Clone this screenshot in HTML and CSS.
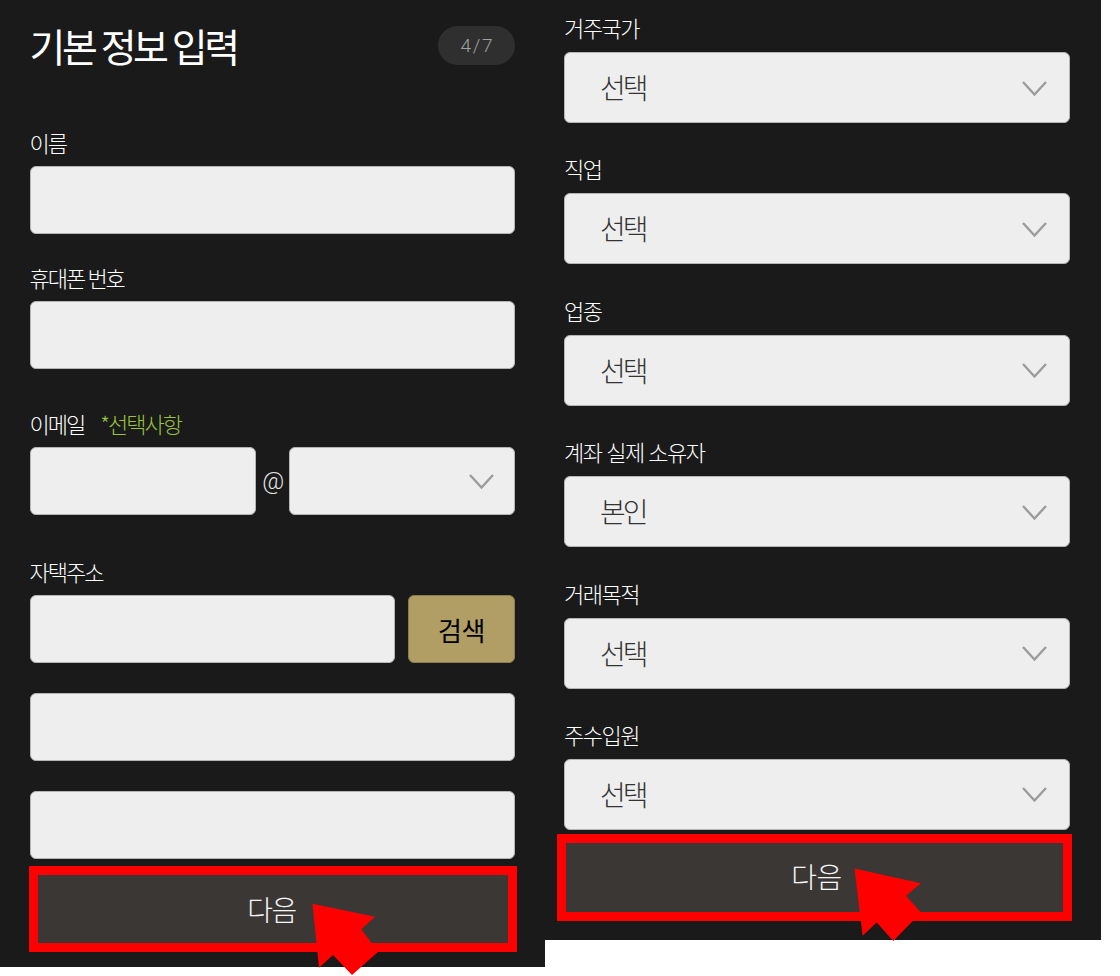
FILE: index.html
```html
<!DOCTYPE html>
<html lang="ko">
<head>
<meta charset="utf-8">
<title>기본 정보 입력</title>
<link rel="stylesheet" href="styles.css">
</head>
<body>
<div class="sheet">
  <section class="panel panel-left">
    <header class="head">
      <h1 class="title">기본 정보 입력</h1>
      <span class="step">4 / 7</span>
    </header>
    <div class="field field-name">
      <label class="label">이름</label>
      <input class="box" type="text">
    </div>
    <div class="field field-phone">
      <label class="label">휴대폰 번호</label>
      <input class="box" type="text">
    </div>
    <div class="field field-mail">
      <label class="label">이메일<span class="optional">*선택사항</span></label>
      <div class="row">
        <input class="box mail-id" type="text">
        <span class="at">@</span>
        <div class="box select mail-domain">
          <svg class="chev" viewBox="0 0 25 15"><path d="M1 1L12.5 13.5L24 1"/></svg>
        </div>
      </div>
    </div>
    <div class="field field-addr">
      <label class="label">자택주소</label>
      <div class="row row-addr">
        <input class="box addr" type="text">
        <button class="search" type="button">검색</button>
      </div>
    </div>
    <input class="box extra extra-one" type="text">
    <input class="box extra extra-two" type="text">
    <button class="next next-left" type="button">다음</button>
    <svg class="arrow arrow-left" viewBox="0 0 70 74"><polygon points="0.5,0.7 63,13.7 49.4,26.3 66,49 40,72 21,52 7,64.7"/></svg>
  </section>
  <section class="panel panel-right">
    <div class="field"><label class="label">거주국가</label><div class="box select big"><span>선택</span><svg class="chev" viewBox="0 0 25 15"><path d="M1 1L12.5 13.5L24 1"/></svg></div></div>
    <div class="field"><label class="label">직업</label><div class="box select big"><span>선택</span><svg class="chev" viewBox="0 0 25 15"><path d="M1 1L12.5 13.5L24 1"/></svg></div></div>
    <div class="field"><label class="label">업종</label><div class="box select big"><span>선택</span><svg class="chev" viewBox="0 0 25 15"><path d="M1 1L12.5 13.5L24 1"/></svg></div></div>
    <div class="field"><label class="label">계좌 실제 소유자</label><div class="box select big"><span>본인</span><svg class="chev" viewBox="0 0 25 15"><path d="M1 1L12.5 13.5L24 1"/></svg></div></div>
    <div class="field"><label class="label">거래목적</label><div class="box select big"><span>선택</span><svg class="chev" viewBox="0 0 25 15"><path d="M1 1L12.5 13.5L24 1"/></svg></div></div>
    <div class="field"><label class="label">주수입원</label><div class="box select big"><span>선택</span><svg class="chev" viewBox="0 0 25 15"><path d="M1 1L12.5 13.5L24 1"/></svg></div></div>
    <button class="next next-right" type="button">다음</button>
    <svg class="arrow arrow-right" viewBox="0 0 70 74"><polygon points="0.5,0.5 67,15.2 52,27.8 67,44.5 39.3,73 22.7,54.5 8.6,67.8"/></svg>
  </section>
</div>
</body>
</html>
```
FILE: styles.css
```css
* { box-sizing: border-box; }
html, body { margin: 0; background: #fff; }
body { font-family: "Noto Sans CJK KR", "Noto Sans", sans-serif; }
.sheet { display: flex; align-items: flex-start; width: 1120px; height: 976px; overflow: hidden; }
.panel { position: relative; background: #1a1a1a; color: #f2f2f2; display: flex; flex-direction: column; }
.panel-left { width: 545px; height: 967px; padding: 26px 0 0 29.5px; }
.panel-right { width: 556px; height: 940px; padding: 20px 0 0 19px; gap: 38.4px; }

.head { display: flex; justify-content: space-between; align-items: center; width: 485.5px; height: 39px; }
.title { margin: 0; font-size: 39px; font-weight: 400; letter-spacing: -3.5px; word-spacing: -1px; line-height: 39px; color: #fff; }
.step { width: 77px; height: 39px; border-radius: 20px; background: #2f2f2f; color: #a0a0a0; font: 300 19px/39px "Roboto", sans-serif; text-align: center; word-spacing: -3px; }

.label { display: block; height: 32px; font-size: 22px; font-weight: 300; line-height: 15px; letter-spacing: -1.5px; color: #fff; }
.panel-left .label { line-height: 17px; letter-spacing: -2px; word-spacing: -1px; }
.optional { margin-left: 16px; color: #9bc13f; }
.field-name { margin-top: 69px; }
.field-phone { margin-top: 35px; }
.field-mail { margin-top: 46px; }
.field-addr { margin-top: 48px; }

.box { display: block; height: 68px; background: #eee; border: 1px solid #b5b5b5; border-radius: 6px; margin: 0; padding: 0; }
.panel-left > .field > .box, .extra { width: 485.5px; }
.row { display: flex; align-items: center; width: 485.5px; }
.mail-id { width: 226px; }
.at { width: 33.5px; padding-left: 2px; text-align: center; font: 300 24px "Roboto", sans-serif; color: #e6e6e6; }
.mail-domain { width: 226px; }
.addr { width: 365.5px; }
.search { width: 107px; height: 68px; margin-left: 13px; padding: 0; border: 1px solid #8a7d50; border-radius: 6px; background: #b19e64; color: #000; font: 400 26px "Noto Sans CJK KR", sans-serif; letter-spacing: -0.5px; }
.extra-one { margin-top: 30px; }
.extra-two { margin-top: 30px; }

.select { position: relative; display: flex; align-items: center; }
.mail-domain .chev { right: 20px; }
.big { width: 506px; height: 71px; padding: 0 0 1px 35px; color: #333; font-size: 28px; font-weight: 300; letter-spacing: -3px; }
.chev { position: absolute; right: 22px; top: 50%; width: 25px; height: 15px; margin-top: -7px; fill: none; stroke: #9c9c9c; stroke-width: 2.4; }

.next { display: block; padding: 0 0 1px; border: 9px solid #f00; background: #3a3735; color: #f5f5f5; font: 300 28px "Noto Sans CJK KR", sans-serif; letter-spacing: -1.5px; }
.next-left { width: 488px; height: 86px; margin: 7px 0 0 -0.5px; padding-right: 3px; }
.next-right { position: absolute; left: 12px; top: 834px; width: 515px; height: 87px; padding-bottom: 3px; padding-left: 4px; letter-spacing: -0.5px; }

.arrow { position: absolute; width: 70px; height: 74px; fill: #f00; }
.arrow-left { left: 312px; top: 903px; }
.arrow-right { left: 309px; top: 868px; }
```
